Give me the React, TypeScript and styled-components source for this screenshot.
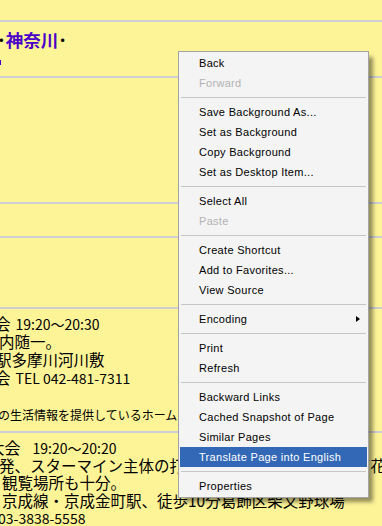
import React from "react";
import styled, { createGlobalStyle } from "styled-components";

const GlobalStyle = createGlobalStyle`
  html, body {
    margin: 0;
    padding: 0;
    width: 382px;
    height: 526px;
    overflow: hidden;
    background: #fdf498;
  }
`;

const Page = styled.div`
  position: relative;
  width: 382px;
  height: 526px;
  overflow: hidden;
  background: #fdf498;
  font-family: "Noto Sans CJK JP", "Noto Sans", sans-serif;
  color: #000;
`;

const Rule = styled.div`
  height: 2px;
  background: #cdcdd4;
`;

const Section = styled.div<{ $height: number; $padTop?: number }>`
  height: ${(p) => p.$height}px;
  padding-top: ${(p) => p.$padTop ?? 0}px;
  box-sizing: border-box;
  display: flex;
  flex-direction: column;
  overflow: hidden;
`;

const Title = styled.div`
  height: 22px;
  line-height: 22px;
  font-size: 17.5px;
  font-weight: 700;
  white-space: nowrap;
  margin-left: -3px;
`;

const Dot = styled.span`
  color: #000;
`;

const LinkText = styled.span`
  color: #4b00c8;
`;

const Mark = styled.div`
  width: 1px;
  height: 5px;
  margin-top: 9px;
  background: #4b00c8;
`;

const Line = styled.div<{ $shift?: number; $size?: number; $height?: number }>`
  height: ${(p) => p.$height ?? 18}px;
  line-height: ${(p) => p.$height ?? 18}px;
  font-size: ${(p) => p.$size ?? 15.5}px;
  margin-left: ${(p) => p.$shift ?? 0}px;
  white-space: nowrap;
`;

const Num = styled.span<{ $gap?: number }>`
  font-size: 14px;
  margin-left: ${(p) => p.$gap ?? 0}px;
`;

const Small = styled.div`
  margin-top: 21px;
  height: 16px;
  line-height: 16px;
  font-size: 12px;
  margin-left: -2px;
  white-space: nowrap;
`;

const Menu = styled.div`
  position: absolute;
  top: 51px;
  left: 178px;
  width: 191px;
  box-sizing: border-box;
  padding: 1px;
  background: #f4f4f4;
  border: 1px solid #a3a3a3;
  box-shadow: 5px 5px 4px -1px rgba(0, 0, 0, 0.42);
  font-family: "Liberation Sans", Arial, sans-serif;
  font-size: 11px;
  letter-spacing: 0.3px;
`;

const Item = styled.div<{ $disabled?: boolean; $active?: boolean }>`
  position: relative;
  height: 20px;
  line-height: 20px;
  padding-left: 19px;
  color: ${(p) => (p.$disabled ? "#b2b2b2" : p.$active ? "#fff" : "#000")};
  background: ${(p) => (p.$active ? "#3268b6" : "transparent")};
  white-space: nowrap;
`;

const Arrow = styled.span`
  position: absolute;
  right: 7px;
  top: 7px;
  width: 0;
  height: 0;
  border-left: 4px solid #000;
  border-top: 3.5px solid transparent;
  border-bottom: 3.5px solid transparent;
`;

const Separator = styled.div`
  height: 1px;
  margin: 4px 1px;
  background: #c6c6c6;
`;

type Entry =
  | { label: string; disabled?: boolean; active?: boolean; submenu?: boolean }
  | "sep";

const entries: Entry[] = [
  { label: "Back" },
  { label: "Forward", disabled: true },
  "sep",
  { label: "Save Background As..." },
  { label: "Set as Background" },
  { label: "Copy Background" },
  { label: "Set as Desktop Item..." },
  "sep",
  { label: "Select All" },
  { label: "Paste", disabled: true },
  "sep",
  { label: "Create Shortcut" },
  { label: "Add to Favorites..." },
  { label: "View Source" },
  "sep",
  { label: "Encoding", submenu: true },
  "sep",
  { label: "Print" },
  { label: "Refresh" },
  "sep",
  { label: "Backward Links" },
  { label: "Cached Snapshot of Page" },
  { label: "Similar Pages" },
  { label: "Translate Page into English", active: true },
  "sep",
  { label: "Properties" },
];

const ContextMenu = () => (
  <Menu>
    {entries.map((e, i) =>
      e === "sep" ? (
        <Separator key={`sep-${i}`} />
      ) : (
        <Item key={e.label} $disabled={e.disabled} $active={e.active}>
          {e.label}
          {e.submenu && <Arrow />}
        </Item>
      )
    )}
  </Menu>
);

const App = () => (
  <>
    <GlobalStyle />
    <Page>
      <Section $height={20} />
      <Rule />
      <Section $height={54} $padTop={7}>
        <Title>
          <Dot>･</Dot>
          <LinkText>神奈川</LinkText>
          <Dot>･</Dot>
        </Title>
        <Mark />
      </Section>
      <Rule />
      <Section $height={124} />
      <Rule />
      <Section $height={32} />
      <Rule />
      <Section $height={69} />
      <Rule />
      <Section $height={122} $padTop={5}>
        <Line $shift={-20.5}>
          大会<Num $gap={5}>19:20〜20:30</Num>
        </Line>
        <Line $shift={-1}>内随一。</Line>
        <Line $shift={-4}>駅多摩川河川敷</Line>
        <Line $shift={-20.5}>
          協会<Num $gap={5}>TEL 042-481-7311</Num>
        </Line>
        <Small>の生活情報を提供しているホーム</Small>
      </Section>
      <Rule />
      <Section $height={93} $padTop={6}>
        <Line $shift={-11.5} $size={16} $height={17.5}>
          大会<Num $gap={12}>19:20〜20:20</Num>
        </Line>
        <Line $shift={-1} $height={17.5}>
          発、スターマイン主体の打ち上げで、会場周辺の河ビ花
        </Line>
        <Line $shift={2} $height={17.5}>
          観覧場所も十分。
        </Line>
        <Line $shift={2} $height={17.5}>
          京成線・京成金町駅、徒歩10分葛飾区柴又野球場
        </Line>
        <Line $shift={-2} $height={17.5}>
          <Num>03-3838-5558</Num>
        </Line>
      </Section>
      <ContextMenu />
    </Page>
  </>
);

export default App;
